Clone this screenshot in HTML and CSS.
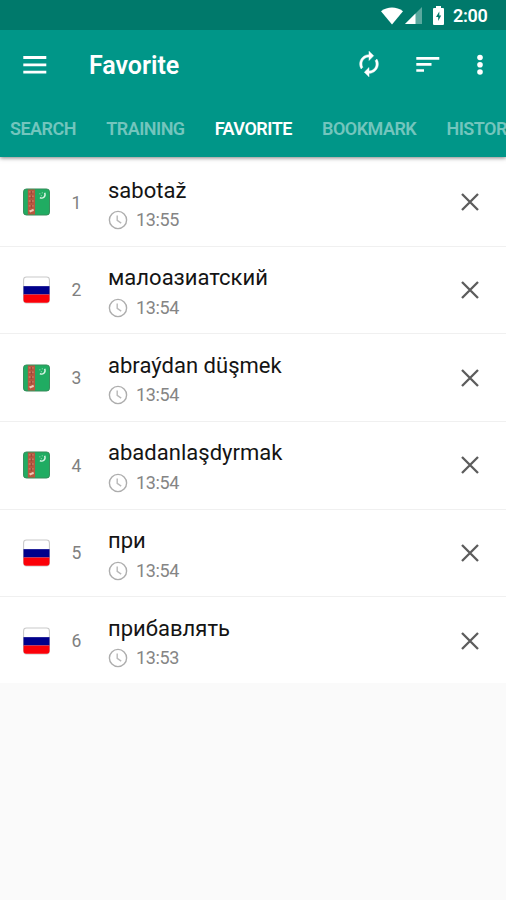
FILE: index.html
```html
<!DOCTYPE html>
<html lang="en">
<head>
<meta charset="utf-8">
<title>Favorite</title>
<link rel="stylesheet" href="styles.css">
</head>
<body>
<svg class="defs" width="0" height="0" aria-hidden="true">
  <symbol id="ru" viewBox="0 0 28 28">
    <rect x=".6" y=".6" width="26.8" height="26.8" rx="3" fill="#fff" stroke="#c9c9c9" stroke-width="1.1"/>
    <path d="M.5 10h27v8.700H.5z" fill="#00008b"/>
    <path d="M.5 18.700h27v5.500a3 3 0 0 1-3 3h-21a3 3 0 0 1-3-3z" fill="#fb0008"/>
  </symbol>
  <symbol id="tm" viewBox="0 0 28 28">
    <rect x=".5" y=".5" width="27" height="27" rx="3" fill="#20ac62" stroke="#368b5a"/>
    <path d="M5 1h7.500v26H5z" fill="#b7573f"/>
    <path d="M6 3.500h5M6 8h5M6 13h5M6 18h5M6 23h5" stroke="#d08468" stroke-width="1.500"/>
    <path d="M8.700 2.500v3M8.700 7v3M8.700 12v3M8.700 17v3" stroke="#9d4638" stroke-width="1.500"/>
    <path d="M7 24l4-2" stroke="#f0c9b5" stroke-width="2"/>
    <path d="M22.500 4.500c1.500 4-2 6.500-5 5" fill="none" stroke="#d8f3e4" stroke-width="1.500"/>
    <path d="M17 5.500h1M19.500 4.500h1M18.500 7.500h1" stroke="#a9dfc1"/>
  </symbol>
  <symbol id="clock" viewBox="0 0 20 20">
    <circle cx="10" cy="10" r="8.600" fill="none" stroke="#adadad" stroke-width="1.400"/>
    <path d="M9.200 5.500v4.800l4 2.800" fill="none" stroke="#b8b8b8" stroke-width="1.400"/>
  </symbol>
  <symbol id="close" viewBox="0 0 20 20">
    <path d="M2 2l16 16M18 2L2 18" fill="none" stroke="#5c5c5c" stroke-width="2.300"/>
  </symbol>
</svg>
<header class="top">
  <div class="status">
    <svg class="wifi" width="22" height="18" viewBox="0 0 22 18"><path d="M0 4.200C6.500-.8 15.500-.8 22 4.200L11 17.500z" fill="#fff"/></svg>
    <svg class="signal" width="17" height="17" viewBox="0 0 17 17"><path d="M17 0v17H0z" fill="#5aa99f"/><path d="M10.500 6.500V17H0z" fill="#fff"/></svg>
    <svg class="battery" width="11" height="19" viewBox="0 0 11 19"><path d="M3 0h5v2h2q1 0 1 1v15q0 1-1 1H1q-1 0-1-1V3q0-1 1-1h2z" fill="#fff"/><path d="M6.300 5.500L3 11h2.200v4l3-5.500h-1.900z" fill="#00796b"/></svg>
    <span class="time">2:00</span>
  </div>
  <div class="bar">
    <svg class="menu" width="24" height="18" viewBox="0 0 24 18"><path d="M.3 1.500h23M.3 8.900h23M.3 16.200h23" stroke="#fff" stroke-width="2.800"/></svg>
    <h1>Favorite</h1>
    <svg class="sync" width="28" height="28" viewBox="0 0 24 24"><path fill="#fff" d="M12 6v3l4-4-4-4v3c-4.420 0-8 3.580-8 8 0 1.570.46 3.030 1.240 4.260L6.700 14.800A5.870 5.870 0 0 1 6 12c0-3.310 2.690-6 6-6zm6.760 1.740L17.300 9.200c.44.840.7 1.790.7 2.800 0 3.310-2.690 6-6 6v-3l-4 4 4 4v-3c4.420 0 8-3.580 8-8 0-1.570-.46-3.030-1.240-4.260z" stroke="#fff" stroke-width=".4"/></svg>
    <svg class="sort" width="24" height="17" viewBox="0 0 24 17"><path d="M.3 2.300h23M.3 8.300h15.200M.3 14.500h7.700" stroke="#fff" stroke-width="2.700"/></svg>
    <svg class="more" width="6" height="22" viewBox="0 0 6 22"><g fill="#fff"><circle cx="3" cy="3.500" r="2.800"/><circle cx="3" cy="10.800" r="2.800"/><circle cx="3" cy="18" r="2.800"/></g></svg>
  </div>
  <nav class="tabs"><span>SEARCH</span><span>TRAINING</span><span class="active">FAVORITE</span><span>BOOKMARK</span><span>HISTORY</span></nav>
</header>
<main class="list">
  <div class="row"><svg class="flag"><use href="#tm"/></svg><span class="num">1</span><div class="body"><div class="word">sabotaž</div><div class="meta"><svg class="clock"><use href="#clock"/></svg>13:55</div></div><svg class="close"><use href="#close"/></svg></div>
  <div class="row"><svg class="flag"><use href="#ru"/></svg><span class="num">2</span><div class="body"><div class="word">малоазиатский</div><div class="meta"><svg class="clock"><use href="#clock"/></svg>13:54</div></div><svg class="close"><use href="#close"/></svg></div>
  <div class="row"><svg class="flag"><use href="#tm"/></svg><span class="num">3</span><div class="body"><div class="word">abraýdan düşmek</div><div class="meta"><svg class="clock"><use href="#clock"/></svg>13:54</div></div><svg class="close"><use href="#close"/></svg></div>
  <div class="row"><svg class="flag"><use href="#tm"/></svg><span class="num">4</span><div class="body"><div class="word">abadanlaşdyrmak</div><div class="meta"><svg class="clock"><use href="#clock"/></svg>13:54</div></div><svg class="close"><use href="#close"/></svg></div>
  <div class="row"><svg class="flag"><use href="#ru"/></svg><span class="num">5</span><div class="body"><div class="word">при</div><div class="meta"><svg class="clock"><use href="#clock"/></svg>13:54</div></div><svg class="close"><use href="#close"/></svg></div>
  <div class="row"><svg class="flag"><use href="#ru"/></svg><span class="num">6</span><div class="body"><div class="word">прибавлять</div><div class="meta"><svg class="clock"><use href="#clock"/></svg>13:53</div></div><svg class="close"><use href="#close"/></svg></div>
</main>
</body>
</html>
```
FILE: styles.css
```css
* { box-sizing: border-box; }
body { margin: 0; height: 900px; overflow: hidden; background: #fafafa; font-family: Roboto, sans-serif; }
svg { display: block; flex: none; }
.defs { display: none; }
.top { position: relative; height: 157px; background: #009688; box-shadow: 0 1px 4px rgba(0, 0, 0, .5); }
.status { height: 30px; background: #00796b; display: flex; align-items: center; padding: 1px 18px 0 381px; color: #fff; }
.signal { margin-left: 2px; }
.battery { margin-left: 11px; }
.time { margin-left: 9px; font-size: 18px; font-weight: 600; letter-spacing: -.3px; line-height: 28px; white-space: nowrap; }
.bar { height: 70px; display: flex; align-items: center; padding: 0 0 1px 23px; color: #fff; }
h1 { margin: 3px 0 0 42px; width: 266px; font-size: 25px; font-weight: 600; letter-spacing: -.02px; line-height: 30px; }
.sync { margin-top: -1px; }
.sort { margin-left: 33px; }
.more { margin-left: 37px; }
.tabs { height: 57px; display: flex; gap: 30.200px; padding-left: 10px; overflow: hidden; color: #73c5bd; font-size: 18px; font-weight: 600; letter-spacing: -.52px; line-height: 58px; white-space: nowrap; }
.tabs .active { color: #fff; }
.list { height: 526px; padding-top: 2px; background: #fff; }
.row { height: 87.650px; display: flex; align-items: center; padding-left: 23px; border-bottom: 1px solid #f0f0f0; }
.row:last-child { border-bottom-color: transparent; background: none; }
.flag { width: 27px; height: 28px; }
.num { width: 20px; margin-left: 16.500px; padding-top: 1px; text-align: center; color: #808080; font-size: 17.500px; }
.body { width: 352px; margin-left: 21.500px; padding-top: 6px; }
.word { color: #141414; font-size: 22px; line-height: 30px; letter-spacing: .02px; white-space: nowrap; }
.meta { display: flex; align-items: center; gap: 8px; margin-top: -.5px; color: #858585; font-size: 18px; letter-spacing: -.35px; line-height: 30px; }
.clock { width: 20px; height: 20px; }
.close { width: 20px; height: 20px; }
```
